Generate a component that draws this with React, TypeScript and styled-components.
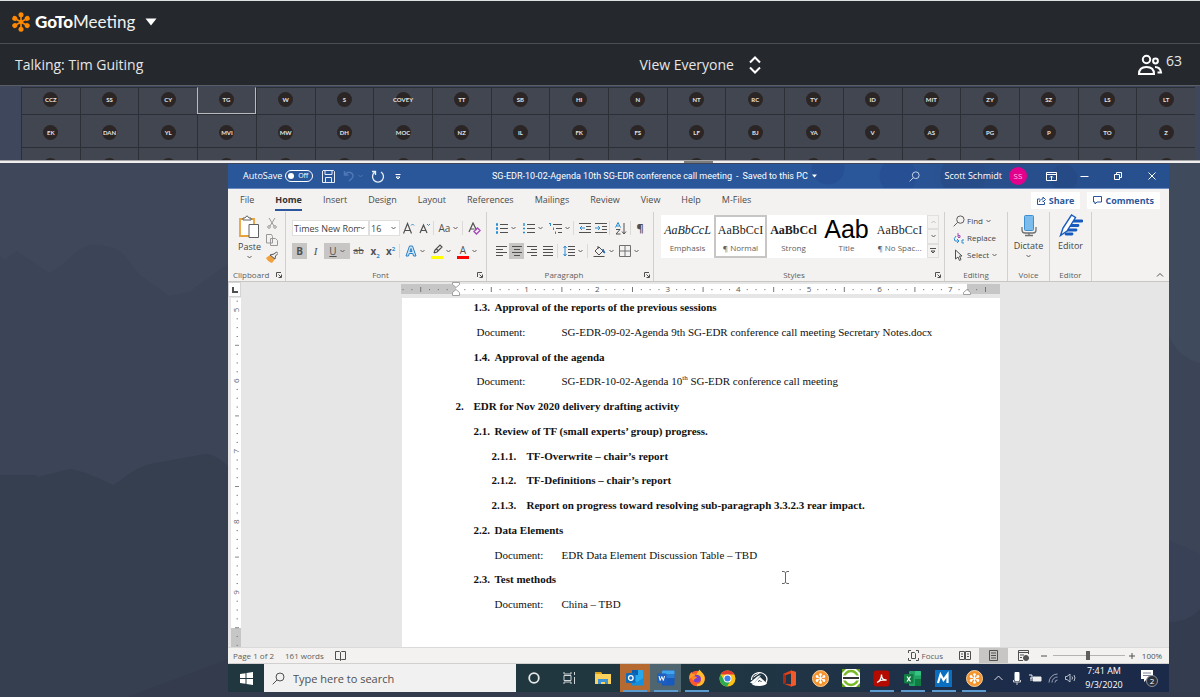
import React from "react";
import styled, { createGlobalStyle, css } from "styled-components";

const UI = '"Open Sans", "Noto Sans", sans-serif';
const SERIF = '"Liberation Serif", serif';

const Global = createGlobalStyle`
  * { box-sizing: border-box; }
  body { margin: 0; background: #3d465a; font-family: ${UI}; }
  button, input, select { font-family: inherit; margin: 0; }
  svg { display: block; flex: none; }
`;

const bare = css`
  border: 0;
  padding: 0;
  background: transparent;
  color: inherit;
`;

/* ---------- meeting frame ---------- */

const Page = styled.div`
  min-height: 100vh;
  display: flex;
  flex-direction: column;
  overflow: hidden;
`;

const BrandBar = styled.header`
  height: 44px;
  border-top: 1px solid #dfe0e1;
  border-bottom: 1px solid #4b4e52;
  background: #25282d;
  display: flex;
  align-items: center;
  padding-left: 11px;
`;

const BrandButton = styled.button`
  ${bare}
  display: flex;
  align-items: center;
  color: #fff;
`;

const BrandName = styled.span`
  font: 400 17px/24px Lato, sans-serif;
  margin: 0 10px 0 4px;
  color: #f0f0f0;
  b {
    font-weight: 900;
    color: #fff;
  }
`;

const TalkBar = styled.div`
  height: 42px;
  background: #25282d;
  border-bottom: 1px solid #5a5d63;
  display: grid;
  grid-template-columns: 53% auto 1fr;
  column-gap: 6px;
  align-items: center;
  padding: 1px 18px 0 15px;
  color: #e6e6e6;
  font-size: 14px;
  line-height: 20px;
`;

const ViewButton = styled.button`
  ${bare}
  display: flex;
  align-items: center;
  gap: 14px;
  font-size: 14px;
  line-height: 20px;
`;

const Attendees = styled.div`
  justify-self: end;
  display: flex;
  gap: 3px;
  align-items: center;
`;

const Count = styled.span`
  margin-bottom: 8px;
`;

const Gallery = styled.ul`
  list-style: none;
  margin: 0;
  padding: 1px 5px 0 21px;
  height: 74px;
  overflow: hidden;
  background: #3e475c;
  display: grid;
  grid-template-columns: repeat(20, 1fr);
  grid-template-rows: 27px 33px 33px;
`;

const Tile = styled.li<{ $active?: boolean; $top?: boolean }>`
  background: #424650;
  border-left: 1px solid #2c2f35;
  border-top: 1px solid #2c2f35;
  display: flex;
  justify-content: center;
  align-items: ${(p) => (p.$top ? "flex-start" : "center")};
  padding-top: ${(p) => (p.$top ? "4px" : "2px")};
  ${(p) =>
    p.$active &&
    css`
      border: 1px solid #b9babd;
      border-top-color: #424650;
    `}
`;

const Initials = styled.span`
  width: 15px;
  height: 15px;
  border-radius: 50%;
  background: #2b2625;
  color: #e4e4e4;
  font: 700 6px/15px Lato, sans-serif;
  display: flex;
  justify-content: center;
`;

const Divider = styled.div`
  height: 3px;
  border-top: 1px solid #a4a4a6;
  background: #f0eeee;
  display: flex;
  padding-left: 57%;
`;

const Grip = styled.div`
  width: 29px;
  height: 2px;
  background: #7d7d7f;
`;

const Stage = styled.main`
  flex: 1;
  position: relative;
  display: flex;
  padding: 1px 31px 5px 228px;
`;

const Mountains = styled.svg`
  position: absolute;
  inset: 0;
  width: 100%;
  height: 100%;
`;

/* ---------- shared desktop ---------- */

const Desktop = styled.section`
  position: relative;
  flex: 1;
  min-width: 0;
  display: flex;
  flex-direction: column;
  color: #444;
  font-size: 9px;
  line-height: 12px;
  white-space: nowrap;
`;

const TitleBar = styled.header`
  height: 25px;
  display: flex;
  align-items: center;
  color: #fff;
  border-bottom: 1px solid #6b8cc2;
  background:
    radial-gradient(circle at 836px 14px, #254a86 0 13px, transparent 14px),
    radial-gradient(circle at 600px 4px, #264f94 0 16px, transparent 17px),
    radial-gradient(circle at 670px 12px, #264f94 0 18px, transparent 19px),
    radial-gradient(circle at 735px 12px, #274c88 0 22px, transparent 23px),
    linear-gradient(90deg, #2a579a 0 70%, #284e8b 80%, #27508f);
`;

const QuickAccess = styled.div`
  flex: 0 0 264px;
  display: flex;
  align-items: center;
  padding-left: 15px;
`;

const AutoSave = styled.label`
  display: flex;
  align-items: center;
  gap: 3px;
  width: 76px;
`;

const Pill = styled.span`
  width: 28px;
  height: 12px;
  border: 1px solid #fff;
  border-radius: 6px;
  display: flex;
  align-items: center;
  justify-content: space-between;
  padding: 0 4px 0 2px;
  font-size: 7px;
  line-height: 10px;
`;

const Knob = styled.input`
  appearance: none;
  width: 6px;
  height: 6px;
  border-radius: 50%;
  background: #fff;
`;

const DocName = styled.h1`
  margin: 0;
  font: 400 9px/12px Roboto, sans-serif;
  display: flex;
  gap: 4px;
  flex: 1;
  align-items: center;
`;

const Account = styled.div`
  display: flex;
  align-items: center;
`;

const Slot = styled.button<{ $w: number; $h?: number; $on?: boolean }>`
  ${bare}
  flex: 0 0 ${(p) => p.$w}px;
  height: ${(p) => p.$h ?? 16}px;
  display: flex;
  align-items: center;
  justify-content: center;
  gap: 3px;
  background: ${(p) => (p.$on ? "#c8c6c4" : "transparent")};
  font-size: 9px;
  line-height: 12px;
`;

const Badge = styled.span`
  width: 18px;
  height: 18px;
  border-radius: 50%;
  margin: 0 8px 0 7px;
  background: #e3008c;
  color: #f7c0e2;
  font-size: 8px;
  line-height: 18px;
  text-align: center;
`;

const TabRow = styled.nav`
  height: 22px;
  background: #f3f2f1;
  display: flex;
  align-items: center;
  padding: 0 9px 0 2px;
`;

const Tab = styled.button<{ $on?: boolean }>`
  ${bare}
  margin: 0 11px 0 10px;
  height: 21px;
  font-size: 9px;
  line-height: 19px;
  color: ${(p) => (p.$on ? "#333" : "#4a4a4a")};
  font-weight: ${(p) => (p.$on ? 700 : 400)};
  border-bottom: 2px solid ${(p) => (p.$on ? "#2b579a" : "transparent")};
`;

const Spring = styled.div`
  flex: 1;
`;

const Pane = styled.button`
  ${bare}
  height: 17px;
  padding: 0 6px;
  margin-left: 7px;
  border-radius: 1px;
  background: #fff;
  color: #2b579a;
  font-size: 9px;
  font-weight: 700;
  display: flex;
  align-items: center;
  gap: 3px;
`;

const Ribbon = styled.div`
  height: 71px;
  background: #f3f2f1;
  border-bottom: 1px solid #c8c6c4;
  display: flex;
  padding-top: 1px;
`;

const Group = styled.section<{ $w: number; $pad?: number }>`
  flex: 0 0 ${(p) => p.$w}px;
  border-right: 1px solid #d2d0ce;
  padding-left: ${(p) => p.$pad ?? 5}px;
  display: flex;
  flex-direction: column;
  justify-content: space-between;
`;

const GroupLabel = styled.h2`
  margin: 0;
  height: 12px;
  font-size: 8px;
  font-weight: 400;
  line-height: 12px;
  color: #605e5c;
  display: flex;
  justify-content: center;
  align-items: center;
`;

const Launch = styled.span`
  margin-left: auto;
  padding-right: 3px;
`;

const LabelText = styled.span`
  flex: 1;
  text-align: center;
  padding-right: 8px;
`;

const ToolRows = styled.div`
  display: flex;
  flex-direction: column;
  padding-top: 8px;
  gap: 7px;
`;

const ToolRow = styled.div`
  display: flex;
  align-items: center;
  height: 16px;
`;

const Rule = styled.i`
  width: 1px;
  height: 14px;
  margin: 0 2px 0 1px;
  background: #dcdad8;
`;

const Combo = styled.label<{ $w: number }>`
  width: ${(p) => p.$w}px;
  height: 16px;
  background: #fff;
  border: 1px solid #e1dfdd;
  display: flex;
  align-items: center;
  padding-right: 3px;
`;

const ComboSelect = styled.select`
  ${bare}
  appearance: none;
  flex: 1;
  min-width: 0;
  height: 14px;
  padding-left: 1px;
  font-size: 9px;
  color: #444;
  overflow: hidden;
`;

const Clip = styled.div`
  display: flex;
  gap: 5px;
  padding: 3px 0 0 5px;
`;

const BigTool = styled.button`
  ${bare}
  display: flex;
  flex-direction: column;
  align-items: center;
  font-size: 9px;
  line-height: 12px;
  color: #444;
  gap: 2px;
`;

const Stack = styled.div`
  display: flex;
  flex-direction: column;
  justify-content: space-between;
  padding: 2px 0 0;
  height: 48px;
`;

const StyleStrip = styled.div`
  margin-top: 3px;
  height: 43px;
  display: flex;
  background: #fff;
  width: 278px;
`;

const StyleCard = styled.button<{ $on?: boolean }>`
  ${bare}
  width: 53px;
  border: 2px solid ${(p) => (p.$on ? "#c8c6c4" : "transparent")};
  padding: 0 1px 2px;
  display: flex;
  flex-direction: column;
  align-items: center;
  justify-content: flex-end;
  color: #605e5c;
  font-size: 8px;
  line-height: 12px;
`;

const Sample = styled.span<{ $look: string }>`
  height: 23px;
  color: #222;
  font: 12px/23px ${SERIF};
  ${(p) => p.$look === "em" && "font-style: italic;"}
  ${(p) => p.$look === "strong" && "font-weight: 700;"}
  ${(p) => p.$look === "title" && 'font: 25px/20px "Liberation Sans", sans-serif; color: #000;'}
`;

const Scroller = styled.div`
  margin-left: auto;
  width: 12px;
  display: grid;
  grid-template-rows: repeat(3, 1fr);
  background: #f3f2f1;
`;

const ScrollButton = styled.button`
  ${bare}
  border: 1px solid #e1dfdd;
  display: flex;
  align-items: center;
  justify-content: center;
`;

const EditList = styled.div`
  display: flex;
  flex-direction: column;
  gap: 5px;
  padding-top: 3px;
`;

const EditItem = styled.button`
  ${bare}
  display: flex;
  align-items: center;
  gap: 2px;
  height: 12px;
  color: #444;
  font-size: 8px;
  line-height: 12px;
  svg:last-child:not(:first-child) {
    margin-left: 1px;
  }
`;

const Collapse = styled.button`
  ${bare}
  margin: auto 5px 1px auto;
  height: 10px;
`;

/* ---------- document ---------- */

const RulerRow = styled.div`
  height: 16px;
  background: #e6e6e6;
  display: flex;
  align-items: flex-start;
`;

const Corner = styled.div`
  width: 13px;
  height: 15px;
  border: 1px solid #d4d4d4;
  background: #fdfdfd;
  display: flex;
  align-items: center;
  justify-content: center;
`;

const Centered = styled.div`
  flex: 1;
  display: flex;
  justify-content: center;
  padding-right: 9px;
`;

const Canvas = styled.div`
  flex: 1;
  background: #e6e6e6;
  display: flex;
`;

const SideRuler = styled.div`
  width: 13px;
  padding-left: 3px;
  overflow: hidden;
`;

const Paper = styled.article`
  width: 598px;
  background: #fff;
  color: #111;
  font: 11px/18px ${SERIF};
`;

const Outline = styled.div`
  height: 315px;
  display: flex;
  flex-direction: column;
  justify-content: space-between;
`;

const Line = styled.p<{ $indent: number; $tab: number; $bold?: boolean }>`
  margin: 0;
  padding-left: ${(p) => p.$indent}px;
  display: grid;
  grid-template-columns: ${(p) => p.$tab}px auto;
  font-weight: ${(p) => (p.$bold ? 700 : 400)};
  sup {
    font-size: 7px;
    line-height: 0;
  }
`;

const Cursor = styled.svg`
  position: absolute;
  left: 553px;
  top: 407px;
`;

const StatusBar = styled.footer`
  height: 17px;
  background: #f3f2f1;
  border-top: 1px solid #dcdad8;
  border-bottom: 1px solid #d2d0ce;
  display: flex;
  align-items: center;
  padding-left: 5px;
  color: #605e5c;
  font-size: 8px;
`;

const StatusText = styled.span<{ $gap: number }>`
  margin-right: ${(p) => p.$gap}px;
`;

const Zoom = styled.input`
  appearance: none;
  width: 72px;
  height: 9px;
  margin: 0 4px;
  background: linear-gradient(#b5b3b1, #b5b3b1) center / 100% 1px no-repeat;
  &::-webkit-slider-thumb {
    appearance: none;
    width: 4px;
    height: 9px;
    background: #605e5c;
  }
`;

/* ---------- taskbar ---------- */

const Taskbar = styled.footer`
  height: 28px;
  background: linear-gradient(90deg, #20373f 0 45%, #203446 62%, #1b2b4a 85%, #1b2a48);
  display: flex;
  align-items: stretch;
  color: #fff;
`;

const Search = styled.label`
  flex: 0 0 252px;
  background: #f1f1f1;
  display: flex;
  align-items: center;
  gap: 8px;
  padding-left: 8px;
`;

const SearchInput = styled.input`
  ${bare}
  flex: 1;
  min-width: 0;
  font-size: 11px;
  color: #444;
  &::placeholder {
    color: #505050;
    opacity: 1;
  }
`;

const TaskButton = styled.button<{ $w: number; $tint?: string; $line?: boolean }>`
  ${bare}
  flex: 0 0 ${(p) => p.$w}px;
  display: flex;
  align-items: center;
  justify-content: center;
  background: ${(p) =>
    p.$line
      ? `linear-gradient(#5b9bd0, #5b9bd0) center bottom / 24px 2px no-repeat ${p.$tint ?? "transparent"}`
      : p.$tint ?? "transparent"};
`;

const Clock = styled.time`
  width: 56px;
  text-align: center;
  font-size: 9px;
  line-height: 14px;
`;

/* ---------- icons ---------- */

type IcoProps = { w?: number; h?: number; vb?: string; c?: string; sw?: number; children: React.ReactNode };
const Ico = ({ w = 14, h = 14, vb, c = "#505050", sw = 1, children }: IcoProps) => (
  <svg width={w} height={h} viewBox={vb ?? `0 0 ${w} ${h}`} fill="none" stroke={c} strokeWidth={sw} aria-hidden="true">
    {children}
  </svg>
);

const Chev = ({ c = "#605e5c" }: { c?: string }) => (
  <Ico w={5} h={4} c={c}><path d="M.5 1 2.5 3 4.5 1" /></Ico>
);

const Daisy = ({ s, c }: { s: number; c: string }) => (
  <svg width={s} height={s} viewBox="-10 -10 20 20" fill={c} stroke={c} aria-hidden="true">
    {[0, 60, 120, 180, 240, 300].map((a) => (
      <g key={a} transform={`rotate(${a})`}>
        <path d="M0 0V-6" strokeWidth="1.6" />
        <circle cy="-7.2" r="2.5" stroke="none" />
      </g>
    ))}
    <circle r="2" stroke="none" />
  </svg>
);

const Lens = ({ s = 13, c = "#505050" }: { s?: number; c?: string }) => (
  <Ico w={s} h={s} vb="0 0 13 13" c={c}>
    <circle cx="8" cy="5" r="4" /><path d="M5 8 .7 12.3" />
  </Ico>
);

const LaunchIcon = () => (
  <Ico w={6} h={6}><path d="M.5 5V.5H5M2.5 2.5 5 5M5.5 2.5v3h-3" /></Ico>
);

const Lines = ({ rows, c = "#505050" }: { rows: [number, number][]; c?: string }) => (
  <Ico w={12} h={12} c={c}>
    {rows.map(([a, b], i) => <path key={i} d={`M${a} ${1.5 + i * 3}H${b}`} />)}
  </Ico>
);

const ListIcon = ({ kind }: { kind: "dot" | "num" | "multi" }) => (
  <Ico w={13} h={13}>
    {kind === "multi" ? (
      <>
        <path d="M4 2.5h9M7 6.5h6M9 10.5h4" />
        <path d="M1.5 1v3M4.5 5.5v2.5M6.5 9.5v2.5M0 1.5h2" stroke="#2a8dd4" />
      </>
    ) : (
      <>
        <path d="M5 2.5h8M5 6.5h8M5 10.5h8" />
        <path d={kind === "dot" ? "M1 2.5h2M1 6.5h2M1 10.5h2" : "M2 1v3M1 6.5h2M1 10.5h2"} stroke="#2a8dd4" strokeWidth={kind === "dot" ? 2.4 : 1.4} />
      </>
    )}
  </Ico>
);

const IndentIcon = ({ out }: { out?: boolean }) => (
  <Ico w={12} h={12}>
    <path d="M0 1.5h12M7 4.5h5M7 7.5h5M0 10.5h12" />
    <path d={out ? "M6 6H1M3 4 1 6l2 2" : "M0 6h5M3 4l2 2-2 2"} stroke="#2a8dd4" />
  </Ico>
);

const Letter = styled.span<{ $c?: string; $size?: number; $fx?: string }>`
  color: ${(p) => p.$c ?? "#505050"};
  font-size: ${(p) => p.$size ?? 10}px;
  line-height: 14px;
  ${(p) => p.$fx === "b" && "font-weight: 700;"}
  ${(p) => p.$fx === "i" && `font-style: italic; font-family: ${SERIF};`}
  ${(p) => p.$fx === "u" && "text-decoration: underline;"}
  ${(p) => p.$fx === "s" && "text-decoration: line-through;"}
  sub, sup {
    font-size: 6px;
    line-height: 0;
    color: #2a8dd4;
  }
`;

const Swatch = styled.span<{ $c: string }>`
  width: 12px;
  height: 15px;
  border-bottom: 3px solid ${(p) => p.$c};
  display: flex;
  justify-content: center;
  align-items: center;
`;

const GrowIcon = ({ down }: { down?: boolean }) => (
  <Ico w={12} h={13}>
    <path d={down ? "M1 11L4.500 3 8 11M2.500 8.500h4" : "M.5 11.500L4.500 1.500l4 10M2 8.500h5"} strokeWidth="1.200" />
    <path d={down ? "M8 2l1.500 1.500L11 2" : "M8 3.500L9.500 2 11 3.500"} stroke="#2a8dd4" />
  </Ico>
);

/* ---------- content ---------- */

const people = [
  "CCZ SS CY TG W S COVEY TT SB HI N NT RC TY ID MIT ZY SZ LS LT".split(" "),
  "EK DAN YL MVI MW DH MOC NZ IL FK FS LF BJ YA V AS PG P TO Z".split(" "),
];

const tabs = ["File", "Home", "Insert", "Design", "Layout", "References", "Mailings", "Review", "View", "Help", "M-Files"];

const styleCards = [
  { name: "Emphasis", look: "em", text: "AaBbCcL" },
  { name: "¶ Normal", look: "normal", text: "AaBbCcI" },
  { name: "Strong", look: "strong", text: "AaBbCcl" },
  { name: "Title", look: "title", text: "Aab" },
  { name: "¶ No Spac...", look: "normal", text: "AaBbCcI" },
];

const outline: { indent: number; tab: number; no: string; text: React.ReactNode; bold?: boolean }[] = [
  { indent: 72, tab: 21, no: "1.3.", text: "Approval of the reports of the previous sessions", bold: true },
  { indent: 75, tab: 85, no: "Document:", text: "SG-EDR-09-02-Agenda 9th SG-EDR conference call meeting Secretary Notes.docx" },
  { indent: 72, tab: 21, no: "1.4.", text: "Approval of the agenda", bold: true },
  { indent: 75, tab: 85, no: "Document:", text: <>SG-EDR-10-02-Agenda 10<sup>th</sup> SG-EDR conference call meeting</> },
  { indent: 54, tab: 18, no: "2.", text: "EDR for Nov 2020 delivery drafting activity", bold: true },
  { indent: 72, tab: 21, no: "2.1.", text: "Review of TF (small experts’ group) progress.", bold: true },
  { indent: 90, tab: 35, no: "2.1.1.", text: "TF-Overwrite – chair’s report", bold: true },
  { indent: 90, tab: 35, no: "2.1.2.", text: "TF-Definitions – chair’s report", bold: true },
  { indent: 90, tab: 35, no: "2.1.3.", text: "Report on progress toward resolving sub-paragraph 3.3.2.3 rear impact.", bold: true },
  { indent: 72, tab: 21, no: "2.2.", text: "Data Elements", bold: true },
  { indent: 93, tab: 67, no: "Document:", text: "EDR Data Element Discussion Table – TBD" },
  { indent: 72, tab: 21, no: "2.3.", text: "Test methods", bold: true },
  { indent: 93, tab: 67, no: "Document:", text: "China – TBD" },
];

const inch = 70.6;

const TopRuler = () => (
  <svg width="599" height="16" viewBox="0 1 599 16" aria-hidden="true">
    <rect y="3" width="599" height="10" fill="#fff" />
    <rect y="3" width="55" height="10" fill="#c6c6c6" />
    <rect x="566" y="3" width="33" height="10" fill="#c6c6c6" />
    {Array.from({ length: 67 }, (_, i) => i - 6).map((k) => {
      const x = 55 + (k * inch) / 8;
      if (k === 0 || x > 596) return null;
      if (k % 8 === 0)
        return <text key={k} x={x} y="11" fontSize="8" textAnchor="middle" fill="#555">{k / 8}</text>;
      return <path key={k} d={k % 4 === 0 ? `M${x} 6v5` : `M${x} 8v1.2`} stroke="#777" />;
    })}
    <path d="M51.5 1.5h7v2l-3.500 3-3.500-3zM55 8.500l3.500 3v3h-7v-3z" fill="#fff" stroke="#a0a0a0" />
    <path d="M566 8.500l3.500 3v2h-7v-2z" fill="#fff" stroke="#a0a0a0" />
  </svg>
);

const LeftRuler = () => (
  <svg width="10" height="349" aria-hidden="true">
    <rect width="10" height="349" fill="#fff" />
    <rect y="330" width="10" height="19" fill="#c6c6c6" />
    {Array.from({ length: 40 }, (_, i) => i - 1).map((k) => {
      const y = 12 + (k * inch) / 8;
      if (k % 8 === 0)
        return (
          <text key={k} transform={`translate(8 ${y}) rotate(-90)`} fontSize="8" textAnchor="middle" fill="#666">
            {5 + k / 8}
          </text>
        );
      return <path key={k} d={k % 4 === 0 ? `M4 ${y}h4` : `M5.500 ${y}h1.500`} stroke="#888" />;
    })}
  </svg>
);

const TaskIcons = {
  outlook: (
    <Ico w={18} h={18} c="none">
      <rect x="6" y="1" width="11" height="14" rx="1" fill="#28a8ea" /><rect x="6" y="1" width="6" height="5" fill="#0a5fb0" />
      <path d="M5 9l6 4 6.500-4v7.500H5z" fill="#1490df" /><rect y="4" width="9.500" height="10" rx="1" fill="#0f6cbd" />
      <circle cx="4.800" cy="9" r="2.300" stroke="#fff" strokeWidth="1.300" />
    </Ico>
  ),
  word: (
    <Ico w={18} h={18} c="none">
      <rect x="5" y="1.500" width="12.500" height="15" rx="1" fill="#185abd" /><path d="M5 2.500q0-1 1-1h10.500q1 0 1 1V5H5z" fill="#41a5ee" /><path d="M5 5h12.500v4H5z" fill="#2b7cd3" />
      <rect y="4.500" width="9.500" height="9.500" rx="1" fill="#1f5fbf" /><path d="M2 7l1.200 4.500L4.800 7.500 6.300 11.500 7.500 7" stroke="#fff" />
    </Ico>
  ),
  firefox: (
    <Ico w={18} h={18} c="none">
      <circle cx="9" cy="9.500" r="7.800" fill="#ff5a2c" /><path d="M9 17.300c5 0 8-3.600 7.800-8C16.500 5 13 3 11.500.5c-.8 2-3 3-3 5.500 2 0 4.500 1 4.500 4.500S11 15 9 15z" fill="#ffbd2e" />
      <path d="M1.200 10C1 6.500 2 4.500 3.500 3l1 2 3-.5-1 2.500" fill="#ff9a2a" /><circle cx="9" cy="9.800" r="3.800" fill="#7b3fd0" /><path d="M4 8c2-1.500 4-.5 5 .5-1 1.500-3 1-3 3C4 11.500 3.500 9.500 4 8z" fill="#ff8a1f" />
    </Ico>
  ),
  chrome: (
    <Ico w={17} h={17} vb="-8.500 -8.500 17 17" c="none">
      <circle r="8" fill="#fbc116" /><path d="M-6.930-4A8 8 0 0 1 6.930-4H0z" fill="#e33b2e" /><path d="M-6.930-4A8 8 0 0 0-.5 8L3 2-3.500 1.500z" fill="#2da94f" />
      <path d="M-6.930-4H7z" fill="#e33b2e" /><circle r="3.900" fill="#fff" /><circle r="3" fill="#3b7ded" />
    </Ico>
  ),
  peak: (
    <Ico w={18} h={17} c="none">
      <path d="M1.500 10A7.800 7 0 0 1 16.500 7Q18 11 14.500 14.500" stroke="#fff" strokeWidth="1.300" />
      <path d="M2 14.500L10 7l7 6.500Q14 16 9.500 16 5 16 2 14.500z" fill="#fff" /><path d="M0 12.500L8 6l3-1-8 9z" fill="#fff" /><path d="M3.500 7l6-4" stroke="#fff" />
      <path d="M8 11.500l2-1 1.500 1.500" stroke="#20344a" />
    </Ico>
  ),
  office: (
    <Ico w={15} h={17} c="none">
      <path d="M1 4l8-3.500 5 1.500v13l-5 1.500L1 13.500l8 .8V3.500L4 5v7l-3 1.500z" fill="#e2421b" /><path d="M9 .5l5 1.500v13l-5 1.500z" fill="#f25a2a" /><path d="M1 4l3 1v7l-3 1.500z" fill="#b3260c" />
    </Ico>
  ),
  green: (
    <Ico w={18} h={18} c="none">
      <rect width="18" height="18" fill="#fff" /><circle cx="9" cy="9" r="7" stroke="#78b928" strokeWidth="2.500" />
      <path d="M0 0h4L0 4zM18 0v4l-4-4zM0 18v-4l4 4zM18 18h-4l4-4z" fill="#5da314" /><path d="M0 6.500h18v5H0z" fill="#fff" /><path d="M1 9h16" stroke="#333" strokeWidth="2" />
    </Ico>
  ),
  acrobat: (
    <Ico w={17} h={17} c="none">
      <rect width="16" height="16" x=".5" y=".5" rx="3" fill="#b30b00" /><path d="M4 12.500c2-1 4.500-4 4.500-8 0 4 2 6 5 5.500-4-.5-7 .5-9.500 2.500" stroke="#fff" strokeWidth="1.300" />
    </Ico>
  ),
  excel: (
    <Ico w={18} h={17} c="none">
      <rect x="5" y="1" width="12" height="15" rx="1" fill="#21a366" /><path d="M11 1h5q1 0 1 1v3.500h-6z" fill="#33c481" /><path d="M11 9h6v6q0 1-1 1h-5z" fill="#107c41" />
      <rect y="4" width="9.500" height="9.500" rx="1" fill="#107c41" /><path d="M3 6.500l3.500 5M6.500 6.500L3 11.500" stroke="#fff" strokeWidth="1.300" />
    </Ico>
  ),
  mfiles: (
    <Ico w={17} h={17} c="none">
      <rect width="17" height="17" fill="#0a6fc0" /><path d="M3 13L5.500 4.500 8.500 10l4-5.500L12.500 13" stroke="#fff" strokeWidth="2.200" />
    </Ico>
  ),
};

const GoToDot = styled.span`
  width: 17px;
  height: 17px;
  border-radius: 50%;
  background: #f5952f;
  border: 1px solid #fbd09c;
  display: flex;
  align-items: center;
  justify-content: center;
`;

export default function App() {
  return (
    <Page>
      <Global />
      <BrandBar>
        <BrandButton>
          <Daisy s={20} c="#ff8a00" />
          <BrandName><b>GoTo</b>Meeting</BrandName>
          <Ico w={12} h={8} c="none"><path d="M.5.5h11L6 7.500z" fill="#fff" /></Ico>
        </BrandButton>
      </BrandBar>

      <TalkBar>
        <span>Talking: Tim Guiting</span>
        <ViewButton>
          View Everyone
          <Ico w={14} h={20} c="#fff" sw={2}><path d="M2 7.500l5-5 5 5M2 12.500l5 5 5-5" /></Ico>
        </ViewButton>
        <Attendees>
          <Ico w={26} h={22} c="#fff" sw={2}>
            <circle cx="9.500" cy="5.500" r="3.700" /><circle cx="18.500" cy="7" r="2.400" />
            <path d="M2 20c0-4.500 3-7 7.500-7s7.500 2.500 7.500 7zM18 13c3.500 0 5.500 2 6 5.500h-3.500" />
          </Ico>
          <Count>63</Count>
        </Attendees>
      </TalkBar>

      <Gallery>
        {people[0].map((n) => (
          <Tile key={n} $top $active={n === "TG"}><Initials>{n}</Initials></Tile>
        ))}
        {people[1].map((n) => (
          <Tile key={n}><Initials>{n}</Initials></Tile>
        ))}
        {people[1].map((n) => (
          <Tile key={n + "-next"}><Initials /></Tile>
        ))}
      </Gallery>
      <Divider><Grip /></Divider>

      <Stage>
        <Mountains viewBox="0 163 1200 534" preserveAspectRatio="none" aria-hidden="true">
          <path d="M0 163h1200v534H0z" fill="#3f485b" />
          <path d="M0 256l5 4 12-9 32 22c20-10 28-28 46-28 30 2 28 10 44 29l30 22 20-4 30-22 10-7v434H0z" fill="#3c4457" />
          <path d="M1169 163h31v200q-20-4-31-26z" fill="#3f4a5d" />
          <path d="M1169 337q11 22 31 26v334h-31z" fill="#3c4458" />
          <path d="M1169 540l31 14v143h-31z" fill="#394156" />
          <path d="M1169 622q20 0 31-13v88h-31z" fill="#343c4f" />
          <path d="M0 475h35l3 2 32-8q15 2 43 16c15-8 20-18 42-22l50-9q10 0 23 12v231H0z" fill="#363f4f" />
          <path d="M128 697l100-38v33h972v5z" fill="#333b4d" />
        </Mountains>

        <Desktop>
          <TitleBar>
            <QuickAccess>
              <AutoSave>
                AutoSave
                <Pill><Knob type="checkbox" aria-label="AutoSave" />Off</Pill>
              </AutoSave>
              <Slot $w={18} aria-label="Save">
                <Ico w={13} h={13} c="#e8eef8"><path d="M1 .5h10.500l1 1v11H.5V1zM3 .5v4h7v-4M3.500 12.500v-5h6v5" /></Ico>
              </Slot>
              <Slot $w={32} aria-label="Undo">
                <Ico w={12} h={12} c="#4f77b5" sw={1.5}><path d="M1.500 1v4h4M2 4.500C5 1 10 2 10 6c0 2-2 3.500-4 5" /></Ico>
                <Chev c="#4f77b5" />
              </Slot>
              <Slot $w={18} aria-label="Redo">
                <Ico w={14} h={14} c="#e8eef8" sw={1.3}><path d="M1 2.500h3.500V6M4 3A5.500 5.500 0 1 0 10 3" /></Ico>
              </Slot>
              <Slot $w={22} aria-label="Customize">
                <Ico w={6} h={7} c="#fff"><path d="M.5 1.500h5M1 4l2 2 2-2z" /></Ico>
              </Slot>
            </QuickAccess>
            <DocName>
              <span>SG-EDR-10-02-Agenda 10th SG-EDR conference call meeting</span>
              <span>-</span>
              <span>Saved to this PC</span>
              <Ico w={5} h={4} c="none"><path d="M0 .5h5L2.500 3.500z" fill="#fff" /></Ico>
            </DocName>
            <Account>
              <Slot $w={60} aria-label="Search"><Lens s={11} c="#dfe8f6" /></Slot>
              <span>Scott Schmidt</span>
              <Badge>SS</Badge>
              <Slot $w={32} aria-label="Ribbon display"><Ico w={11} h={9} c="#fff"><path d="M.5.5h10v8H.5zM.5 2.500h10M5.500 8V4M4 5.500 5.500 4 7 5.500" /></Ico></Slot>
              <Slot $w={34} aria-label="Minimize"><Ico w={9} h={9} c="#fff"><path d="M.5 4.500h8" /></Ico></Slot>
              <Slot $w={34} aria-label="Restore"><Ico w={8} h={8} c="#fff"><path d="M.5 2.500h5v5h-5zM2.500 2.500v-2h5v5h-2" /></Ico></Slot>
              <Slot $w={34} aria-label="Close"><Ico w={8} h={8} c="#fff"><path d="M.5.5l7 7M7.500.5l-7 7" /></Ico></Slot>
            </Account>
          </TitleBar>

          <TabRow>
            {tabs.map((t) => <Tab key={t} $on={t === "Home"}>{t}</Tab>)}
            <Spring />
            <Pane>
              <Ico w={9} h={9} c="#2b579a"><path d="M3 3H.5v5.500h7V6M2.500 6c0-2 1.500-3 3.500-3V1l2.500 2.500L6 6V4.500" /></Ico>
              Share
            </Pane>
            <Pane>
              <Ico w={9} h={9} c="#2b579a"><path d="M.5.5h8v5.500H4L2 8V6H.5z" /></Ico>
              Comments
            </Pane>
          </TabRow>

          <Ribbon>
            <Group $w={58}>
              <Clip>
                <BigTool>
                  <Ico w={22} h={24} c="none">
                    <path d="M2 4h14v17H2z" fill="#fff" stroke="#e8a33d" strokeWidth="1.800" /><path d="M5 5V3h2q2-4 4 0h2v2z" fill="#fff" stroke="#606060" />
                    <path d="M11 9.500h9.500v13H11z" fill="#fff" stroke="#606060" />
                  </Ico>
                  Paste
                  <Chev />
                </BigTool>
                <Stack>
                  <Ico w={12} h={12} c="#9a9896"><path d="M3 1l5 8M9 1L4 9" /><circle cx="3" cy="10" r="1.300" /><circle cx="9" cy="10" r="1.300" /></Ico>
                  <Ico w={12} h={12} c="#9a9896"><path d="M.5.5h5l1 2V9h-6zM4.500 4.500h5l2 2v5h-7z" fill="#f3f2f1" /></Ico>
                  <Ico w={12} h={12} c="none"><path d="M0 7l4-3 5 4-3 4Q2 11 0 7z" fill="#f0a03c" /><path d="M4 4l5 4 .5-3L12 2.500 10.500 1 8 3z" stroke="#555" fill="#f3f2f1" /></Ico>
                </Stack>
              </Clip>
              <GroupLabel>Clipboard<Launch><LaunchIcon /></Launch></GroupLabel>
            </Group>

            <Group $w={201} $pad={6}>
              <ToolRows>
                <ToolRow>
                  <Combo $w={77}>
                    <ComboSelect aria-label="Font"><option>Times New Roman</option></ComboSelect><Chev />
                  </Combo>
                  <Combo $w={31}>
                    <ComboSelect aria-label="Font size"><option>16</option></ComboSelect><Chev />
                  </Combo>
                  <Slot $w={17} aria-label="Grow font"><GrowIcon /></Slot>
                  <Slot $w={15} aria-label="Shrink font"><GrowIcon down /></Slot>
                  <Rule />
                  <Slot $w={25}><Letter>Aa</Letter><Chev /></Slot>
                  <Rule />
                  <Slot $w={18} aria-label="Clear formatting">
                    <Ico w={13} h={13}><path d="M1 10L5 1l3.500 7M2.500 7h4" strokeWidth="1.200" /><path d="M6 9.500l3.500-3.500 2.500 2.500-3.500 3.500z" stroke="#a548b8" strokeWidth="1.400" /></Ico>
                  </Slot>
                </ToolRow>
                <ToolRow>
                  <Slot $w={15} $on><Letter $fx="b">B</Letter></Slot>
                  <Slot $w={17}><Letter $fx="i" $size={11}>I</Letter></Slot>
                  <Slot $w={26} $on><Letter $fx="u">U</Letter><Chev /></Slot>
                  <Slot $w={17}><Letter $fx="s" $size={9}>ab</Letter></Slot>
                  <Slot $w={16}><Letter $fx="b">x<sub>2</sub></Letter></Slot>
                  <Slot $w={15}><Letter $fx="b">x<sup>2</sup></Letter></Slot>
                  <Rule />
                  <Slot $w={26} aria-label="Text effects">
                    <Ico w={12} h={12} c="#2a7fc4"><path d="M1 11L4.500 1h3L11 11H8.500L7.800 8.500H4.200L3.500 11zM5 6.500h2L6 3.500z" fill="#cfe6f7" /></Ico><Chev />
                  </Slot>
                  <Slot $w={26} aria-label="Highlight">
                    <Swatch $c="#ffff00"><Ico w={11} h={11}><path d="M2 9l1-3L8 1l2 2-5 5-3 1M4.500 5L6.500 7" strokeWidth="1.200" /></Ico></Swatch><Chev />
                  </Slot>
                  <Slot $w={26} aria-label="Font colour"><Swatch $c="#f00"><Letter>A</Letter></Swatch><Chev /></Slot>
                </ToolRow>
              </ToolRows>
              <GroupLabel><LabelText>Font</LabelText><Launch><LaunchIcon /></Launch></GroupLabel>
            </Group>

            <Group $w={167}>
              <ToolRows>
                <ToolRow>
                  <Slot $w={27} aria-label="Bullets"><ListIcon kind="dot" /><Chev /></Slot>
                  <Slot $w={27} aria-label="Numbering"><ListIcon kind="num" /><Chev /></Slot>
                  <Slot $w={26} aria-label="Multilevel"><ListIcon kind="multi" /><Chev /></Slot>
                  <Rule />
                  <Slot $w={17} aria-label="Decrease indent"><IndentIcon out /></Slot>
                  <Slot $w={15} aria-label="Increase indent"><IndentIcon /></Slot>
                  <Rule />
                  <Slot $w={17} aria-label="Sort">
                    <Ico w={12} h={13}><path d="M.5 5.500L3 .5l2.500 5M1.500 4h3" stroke="#2a8dd4" /><path d="M1 7.500h4L1 12h4.500M9 1v11M7 9.500L9 12l2-2.500" /></Ico>
                  </Slot>
                  <Rule />
                  <Slot $w={14}><Letter $size={11} $fx="b">¶</Letter></Slot>
                </ToolRow>
                <ToolRow>
                  <Slot $w={17} aria-label="Align left"><Lines rows={[[1, 12], [1, 8], [1, 12], [1, 8]]} /></Slot>
                  <Slot $w={15} $on aria-label="Center"><Lines rows={[[1, 11], [3, 9], [1, 11], [3, 9]]} /></Slot>
                  <Slot $w={16} aria-label="Align right"><Lines rows={[[1, 11], [5, 11], [1, 11], [5, 11]]} /></Slot>
                  <Slot $w={16} aria-label="Justify"><Lines rows={[[1, 11], [1, 11], [1, 11], [1, 11]]} /></Slot>
                  <Rule />
                  <Slot $w={26} aria-label="Line spacing">
                    <Ico w={12} h={12}><path d="M5 1.500h7M5 4.500h7M5 7.500h7M5 10.500h7" /><path d="M2 1v10M.5 3L2 1l1.500 2M.5 9L2 11l1.500-2" stroke="#2a8dd4" /></Ico><Chev />
                  </Slot>
                  <Rule />
                  <Slot $w={26} aria-label="Shading">
                    <Ico w={13} h={13}><path d="M2 6l4-4 4 4-4 4zM5 1v3M.5 11.500h11" /><path d="M10 4l2 4-2-1z" fill="#2a6db4" stroke="#2a6db4" /></Ico><Chev />
                  </Slot>
                  <Slot $w={26} aria-label="Borders">
                    <Ico w={12} h={12} c="#707070"><path d="M.5.500h11v11H.5zM6 .5v11M.5 6h11" /></Ico><Chev />
                  </Slot>
                </ToolRow>
              </ToolRows>
              <GroupLabel><LabelText>Paragraph</LabelText><Launch><LaunchIcon /></Launch></GroupLabel>
            </Group>

            <Group $w={291} $pad={7}>
              <StyleStrip>
                {styleCards.map((s) => (
                  <StyleCard key={s.name} $on={s.name === "¶ Normal"}>
                    <Sample $look={s.look}>{s.text}</Sample>
                    {s.name}
                  </StyleCard>
                ))}
                <Scroller>
                  <ScrollButton aria-label="Up"><Ico w={5} h={4} c="#c0c0c0"><path d="M.5 3 2.500 1 4.500 3" /></Ico></ScrollButton>
                  <ScrollButton aria-label="Down"><Chev /></ScrollButton>
                  <ScrollButton aria-label="More"><Ico w={6} h={6}><path d="M0 .5h6M1 3l2 2 2-2z" /></Ico></ScrollButton>
                </Scroller>
              </StyleStrip>
              <GroupLabel><LabelText>Styles</LabelText><Launch><LaunchIcon /></Launch></GroupLabel>
            </Group>

            <Group $w={63} $pad={8}>
              <EditList>
                <EditItem><Lens s={12} />Find<Chev /></EditItem>
                <EditItem>
                  <Ico w={12} h={12}><path d="M5 1v4M5 3.500h2v2H5" stroke="#a548b8" /><path d="M11 8H9v3h2M3 4Q0 7 2 9h3M4 7l2 2-2 2" stroke="#2a8dd4" /></Ico>Replace
                </EditItem>
                <EditItem><Ico w={12} h={12}><path d="M2.500 1v9l2.500-2 1.500 3.500 1.500-1L6.500 7H9z" /></Ico>Select<Chev /></EditItem>
              </EditList>
              <GroupLabel><LabelText>Editing</LabelText></GroupLabel>
            </Group>

            <Group $w={42} $pad={0}>
              <BigTool>
                <Ico w={18} h={26} c="none">
                  <rect x="4.500" y="3.500" width="9" height="15" rx="1" fill="#7cbcec" stroke="#3d8fd0" /><path d="M2 15v3q0 3 3 3h8q3 0 3-3v-3M9 21v2.500M5 23.500h8" stroke="#707070" strokeWidth="1.300" />
                </Ico>
                Dictate
                <Chev />
              </BigTool>
              <GroupLabel>Voice</GroupLabel>
            </Group>

            <Group $w={42} $pad={0}>
              <BigTool>
                <Ico w={24} h={26} c="none">
                  <path d="M12 9h11M10 13.500h9M8 18h9M7 22h6" stroke="#185abd" strokeWidth="2.800" strokeLinecap="round" />
                  <path d="M1.500 23.500L4 16 12.500 3l4 2.500L8 19z" fill="#fff" stroke="#185abd" strokeWidth="1.400" />
                </Ico>
                Editor
              </BigTool>
              <GroupLabel>Editor</GroupLabel>
            </Group>
            <Collapse aria-label="Collapse ribbon"><Ico w={8} h={6}><path d="M1 4.500l3-3 3 3" /></Ico></Collapse>
          </Ribbon>

          <RulerRow>
            <Corner><Ico w={6} h={6} sw={2}><path d="M1 0v5h5" /></Ico></Corner>
            <Centered><TopRuler /></Centered>
          </RulerRow>

          <Canvas>
            <SideRuler><LeftRuler /></SideRuler>
            <Centered>
              <Paper>
                <Outline>
                  {outline.map((l, i) => (
                    <Line key={i} $indent={l.indent} $tab={l.tab} $bold={l.bold}>
                      <span>{l.no}</span><span>{l.text}</span>
                    </Line>
                  ))}
                </Outline>
              </Paper>
            </Centered>
          </Canvas>
          <Cursor width="9" height="13" fill="none" stroke="#666"><path d="M1 .5h2l1.500 1 1.500-1h2M4.500 1.500v10M1 12.500h2l1.500-1 1.500 1h2" /></Cursor>

          <StatusBar>
            <StatusText $gap={11}>Page 1 of 2</StatusText>
            <StatusText $gap={11}>161 words</StatusText>
            <Ico w={11} h={11}><path d="M.5 1.500h4l1 1 1-1h4v8h-4l-1 1-1-1h-4zM5.500 2.500v8" /></Ico>
            <Spring />
            <Ico w={11} h={11}><path d="M.5 3V.5H3M8 .5h2.500V3M.5 8v2.500H3M8 10.500h2.500V8M3.500 2.500h3l1 1v5h-4z" /></Ico>
            <StatusText $gap={8}>&nbsp;Focus</StatusText>
            <Slot $w={28} $h={15} aria-label="Read mode"><Ico w={12} h={10}><path d="M.5.500h5v8h-5zM6.500.500h5v8h-5zM2 3h2M2 5.500h2M8 3h2M8 5.500h2" /></Ico></Slot>
            <Slot $w={29} $h={15} $on aria-label="Print layout"><Ico w={9} h={11}><path d="M.5.500h8v10h-8zM2 3h5M2 5.500h5M2 8h5" /></Ico></Slot>
            <Slot $w={31} $h={15} aria-label="Web layout"><Ico w={11} h={11}><path d="M10.500 4V.5H.5v10H5M.5 2.500h10M2 5h4M2 7.500h2" /><circle cx="8" cy="8" r="2.500" fill="#555" /></Ico></Slot>
            <Slot $w={10} $h={15} aria-label="Zoom out"><Ico w={6} h={6}><path d="M0 3h6" /></Ico></Slot>
            <Zoom type="range" aria-label="Zoom" min={0} max={100} defaultValue={49} />
            <Slot $w={6} $h={15} aria-label="Zoom in"><Ico w={6} h={6}><path d="M0 3h6M3 0v6" /></Ico></Slot>
            <Slot $w={34} $h={15}><Letter $size={8}>100%</Letter></Slot>
          </StatusBar>

          <Taskbar>
            <TaskButton $w={36} aria-label="Start"><Ico w={13} h={13} c="none"><path d="M0 2l5.500-.8V6H0zM6.500 1L13 0v6H6.500zM0 7h5.500v4.800L0 11zM6.500 7H13v6l-6.500-1z" fill="#fff" /></Ico></TaskButton>
            <Search><Lens s={13} /><SearchInput aria-label="Search" placeholder="Type here to search" /></Search>
            <TaskButton $w={36} aria-label="Cortana"><Ico w={12} h={12} c="#e8e8e8" sw={1.8}><circle cx="6" cy="6" r="4.800" /></Ico></TaskButton>
            <TaskButton $w={34} aria-label="Task view"><Ico w={13} h={12} c="#cfd6d8"><path d="M1 0v2h7V0M1 12v-2h7v2M1 3.500h7v5H1zM11.500 0v3M11.500 5v7" /></Ico></TaskButton>
            <TaskButton $w={34} aria-label="File Explorer"><Ico w={16} h={14} c="none"><path d="M0 1h6l1 2h9v10H0z" fill="#fbd35c" /><path d="M0 1h6l1 2H0z" fill="#e0a317" /><path d="M3 13V8h10v5h-3v-2H6v2z" fill="#3f94d8" /></Ico></TaskButton>
            <TaskButton $w={30} $tint="#b46a30" $line aria-label="Outlook">{TaskIcons.outlook}</TaskButton>
            <TaskButton $w={31} $tint="#4f6570" $line aria-label="Word">{TaskIcons.word}</TaskButton>
            <TaskButton $w={31} $line aria-label="Firefox">{TaskIcons.firefox}</TaskButton>
            <TaskButton $w={31} aria-label="Chrome">{TaskIcons.chrome}</TaskButton>
            <TaskButton $w={31} aria-label="Basecamp">{TaskIcons.peak}</TaskButton>
            <TaskButton $w={31} aria-label="Office">{TaskIcons.office}</TaskButton>
            <TaskButton $w={31} aria-label="GoTo"><GoToDot><Daisy s={11} c="#fff" /></GoToDot></TaskButton>
            <TaskButton $w={30} aria-label="Utility">{TaskIcons.green}</TaskButton>
            <TaskButton $w={31} $line aria-label="Acrobat">{TaskIcons.acrobat}</TaskButton>
            <TaskButton $w={31} $line aria-label="Excel">{TaskIcons.excel}</TaskButton>
            <TaskButton $w={31} $line aria-label="M-Files">{TaskIcons.mfiles}</TaskButton>
            <TaskButton $w={30} $line aria-label="GoToMeeting"><GoToDot><Daisy s={11} c="#fff" /></GoToDot></TaskButton>
            <Spring />
            <TaskButton $w={19} aria-label="Hidden icons"><Ico w={9} h={6} c="#ddd"><path d="M.5 5l4-4 4 4" /></Ico></TaskButton>
            <TaskButton $w={18} aria-label="Microphone"><Ico w={8} h={13} c="none"><rect x="1.500" width="5" height="9" rx="1" fill="#fff" /><path d="M.5 8v2h7V8M4 10v3" stroke="#ccc" /></Ico></TaskButton>
            <TaskButton $w={18} aria-label="Battery"><Ico w={13} h={9} c="#eee"><path d="M4 3h8v4H4z" fill="#eee" /><path d="M0 1h3v3H1M2 4v3" /></Ico></TaskButton>
            <TaskButton $w={18} aria-label="Network"><Ico w={10} h={10} c="#9aa5b8"><path d="M1 9.500A8.500 8.500 0 0 1 9.500 1M4 9.500A5.500 5.500 0 0 1 9.500 4M7 9.500A2.500 2.500 0 0 1 9.500 7" /></Ico></TaskButton>
            <TaskButton $w={17} aria-label="Volume"><Ico w={11} h={10} c="#b8c0ce"><path d="M.5 3.500H2L5 1v8L2 6.500H.5zM7 3.500q1 1.500 0 3M9 2q2 3 0 6" /></Ico></TaskButton>
            <Clock>7:41 AM<br />9/3/2020</Clock>
            <TaskButton $w={40} aria-label="Notifications">
              <Ico w={18} h={18} c="none"><path d="M1 1h12v9H7l-3 3v-3H1z" fill="#fff" /><path d="M3 4h8M3 6.500h8" stroke="#7a8498" /><circle cx="12" cy="12" r="5.500" fill="#2b2f3a" stroke="#8d93a0" /><text x="12" y="15" fontSize="8" fill="#fff" textAnchor="middle">2</text></Ico>
            </TaskButton>
          </Taskbar>
        </Desktop>
      </Stage>
    </Page>
  );
}
